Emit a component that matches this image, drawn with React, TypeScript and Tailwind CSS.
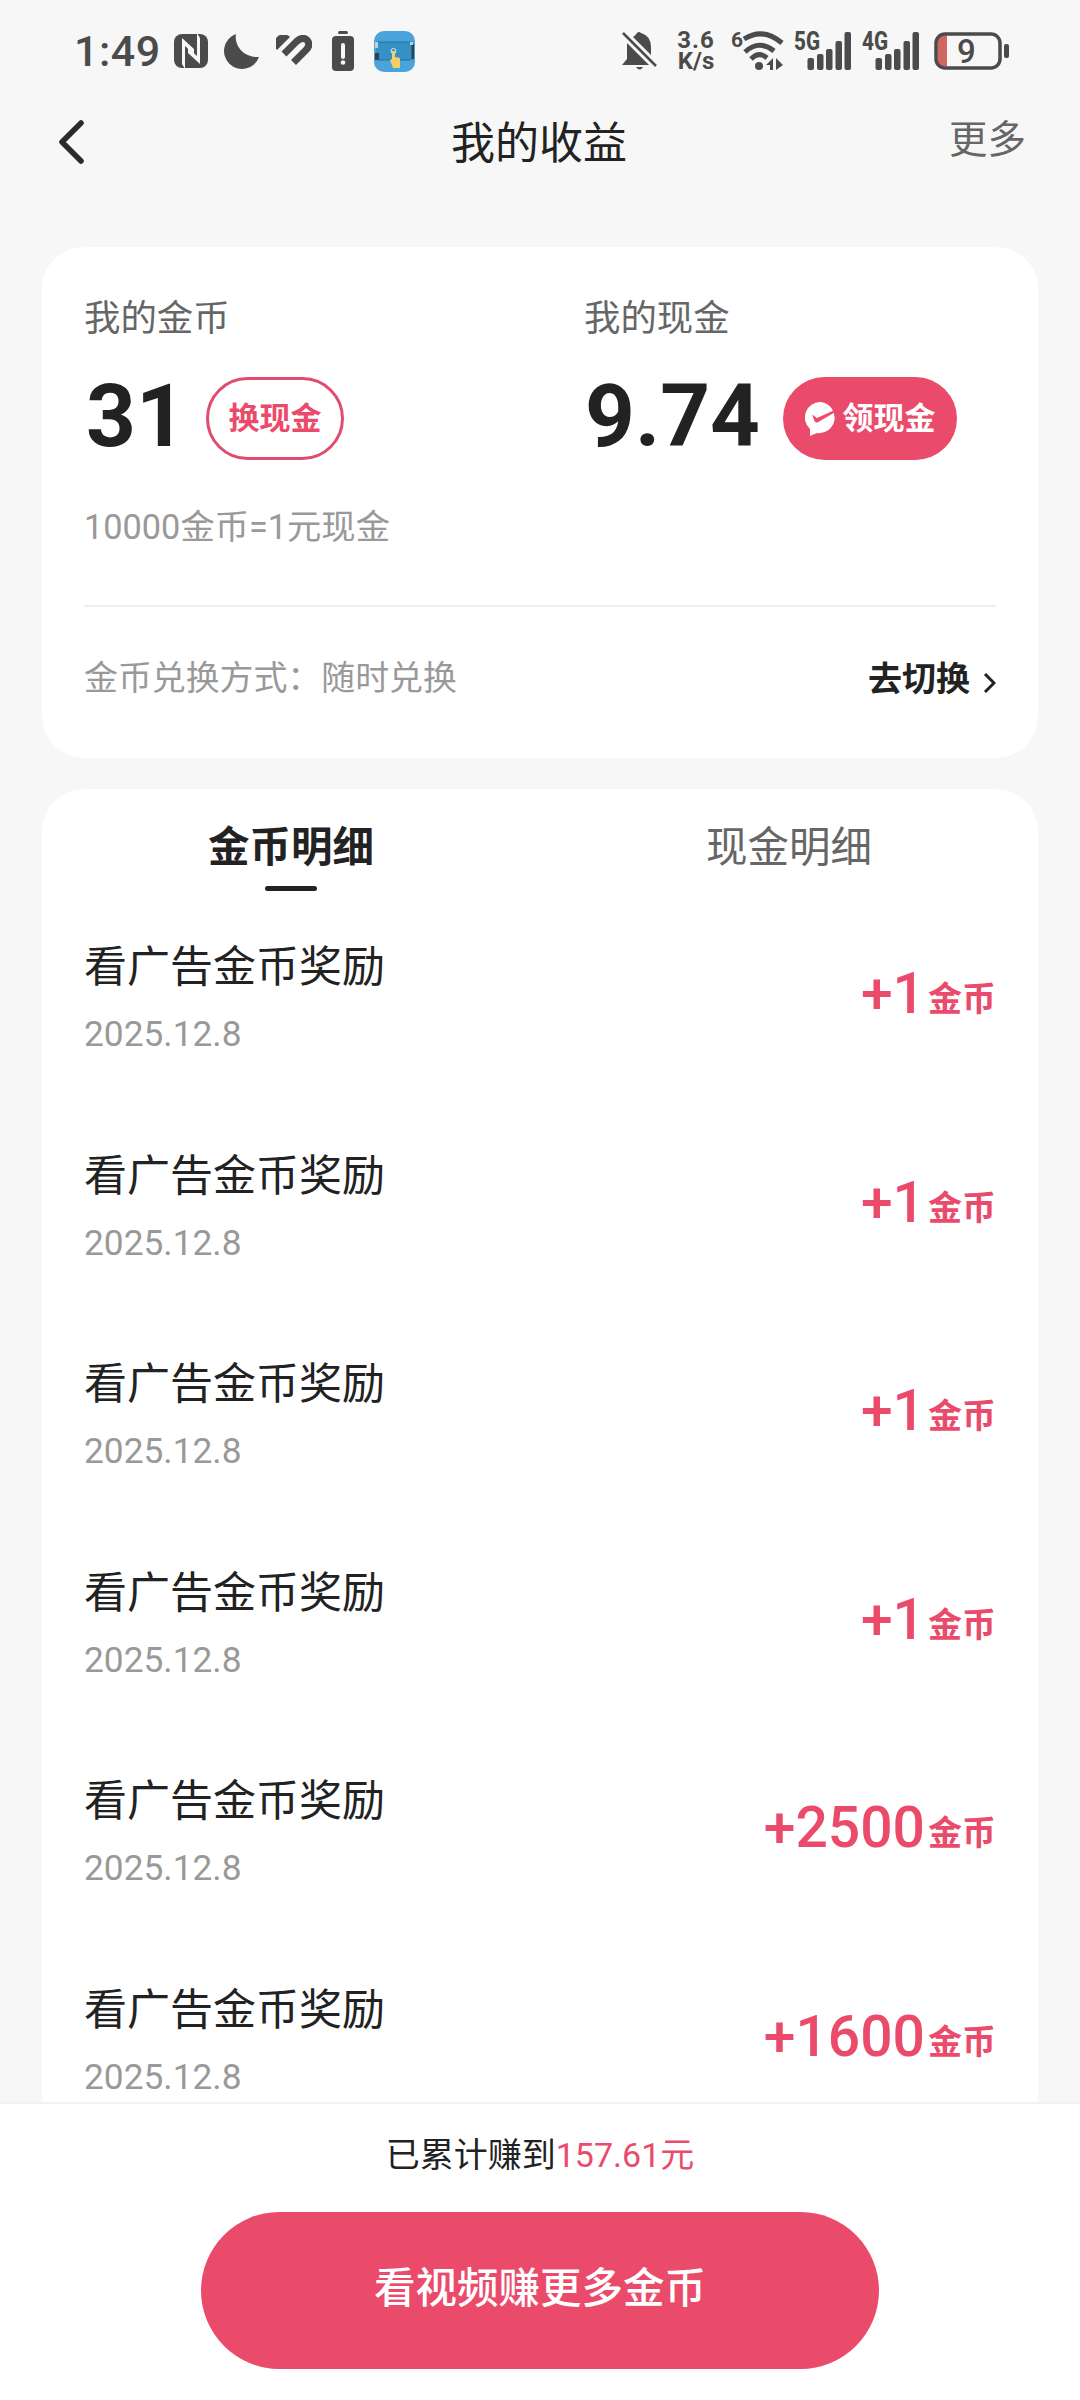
import React, { useState } from 'react';

interface CoinRecord {
    id: number;
    title: string;
    date: string;
    amount: number;
}

const RECORDS: CoinRecord[] = [
    { id: 1, title: '看广告金币奖励', date: '2025.12.8', amount: 1 },
    { id: 2, title: '看广告金币奖励', date: '2025.12.8', amount: 1 },
    { id: 3, title: '看广告金币奖励', date: '2025.12.8', amount: 1 },
    { id: 4, title: '看广告金币奖励', date: '2025.12.8', amount: 1 },
    { id: 5, title: '看广告金币奖励', date: '2025.12.8', amount: 2500 },
    { id: 6, title: '看广告金币奖励', date: '2025.12.8', amount: 1600 },
];

const SignalBars: React.FC<{ label: string }> = ({ label }) => (
    <svg className="overflow-visible" width="58" height="40" viewBox="0 0 58 40" fill="#4b4b4b">
        <text x="0" y="19" fontSize="25" fontWeight="800" textLength="26" lengthAdjust="spacingAndGlyphs">{label}</text>
        <rect x="13.500" y="27" width="6.500" height="12" rx="2" />
        <rect x="23" y="23" width="6.500" height="16" rx="2" />
        <rect x="32" y="18" width="6.500" height="21" rx="2" />
        <rect x="41.500" y="10" width="6.500" height="29" rx="2" />
        <rect x="50.500" y="1" width="6.500" height="38" rx="2" />
    </svg>
);

const StatusBar: React.FC = () => (
    <div className="flex h-[102px] items-center justify-between pl-[74px] pr-[70px] text-[#4b4b4b]">
        <div className="flex items-center">
            <span className="w-[100px] text-[43px] font-medium leading-none tracking-[0.5px]">1:49</span>
            {/* NFC */}
            <svg width="34" height="36" viewBox="0 0 34 36">
                <rect x="0" y="1" width="34" height="34" rx="8" fill="#4b4b4b" />
                <path d="M8 5L20 16V21L11 13V36L8 31Z" fill="#f7f7f7" />
                <path d="M26 31L14 20V15L23 23V0L26 5Z" fill="#f7f7f7" />
            </svg>
            {/* Do not disturb */}
            <svg className="ml-[15px]" width="37" height="37" viewBox="0 0 37 37" fill="#4b4b4b">
                <path d="M13 1C11 11 19 25 36 24A18 18 0 1 1 13 1Z" />
            </svg>
            {/* Health */}
            <svg className="ml-4" width="36" height="32" viewBox="0 0 36 32">
                <path d="M1 15A8 8 0 0 1 14 2Z" fill="#4b4b4b" />
                <path d="M8 19L20.500 6.500Q27 1 31 5Q35 10 30 15L17.500 27.500" fill="none" stroke="#4b4b4b" strokeWidth="7" />
            </svg>
            {/* Low battery */}
            <svg className="ml-5" width="22" height="40" viewBox="0 0 22 40">
                <rect x="6" y="0" width="10" height="3" rx="1.500" fill="#4b4b4b" />
                <rect x="0" y="5" width="22" height="35" rx="4" fill="#4b4b4b" />
                <path d="M11 14V26" stroke="#f7f7f7" strokeWidth="4" strokeLinecap="round" />
                <circle cx="11" cy="31.500" r="2.300" fill="#f7f7f7" />
            </svg>
            {/* Running app */}
            <svg className="ml-5" width="41" height="41" viewBox="0 0 41 41">
                <rect width="41" height="41" rx="10" fill="#4ba3dc" />
                <rect x="2" y="11" width="37" height="18" fill="#3590c4" />
                <path d="M2 11H39M4 29H37" stroke="#2b7294" strokeWidth="1" />
                <path d="M1 22h4v7H1zM37.500 13h2.500v15h-2.500z" fill="#2d4152" />
                <path d="M1 11h3v6H1zM36 11h3v3h-3z" fill="#b9d3e0" />
                <circle cx="19.500" cy="20" r="2.500" fill="none" stroke="#d5edf7" strokeWidth="1" />
                <path d="M18 20h3v6l5 1v10h-7l-3-8 2-1z" fill="#f2cf6b" />
            </svg>
        </div>
        <div className="flex items-center">
            {/* Muted */}
            <svg width="36" height="40" viewBox="0 0 36 40" fill="#4b4b4b">
                <path d="M5 12L27 34H0L5 28ZM11 6Q14 4 15 2Q17 0 19 2Q29 5 29 16V24ZM14 36h7q-3 5-7 0Z" />
                <path d="M1 2L34 35" stroke="#4b4b4b" strokeWidth="2.500" />
            </svg>
            <div className="ml-[18px] flex w-10 flex-col items-center text-[24px] font-bold leading-[21px]">
                <span className="tracking-[1px]">3.6</span>
                <span>K/s</span>
            </div>
            {/* Wi-Fi 6 */}
            <svg className="ml-4 overflow-visible" width="52" height="42" viewBox="0 0 52 42" fill="#4b4b4b">
                <text x="-1" y="17" fontSize="21" fontWeight="700">6</text>
                <path d="M12 9Q31 -3 50 13M13 22Q27 9 42 21M19 29Q27 21 35 28" fill="none" stroke="#4b4b4b" strokeWidth="5" />
                <circle cx="27" cy="36" r="4" />
                <path d="M34 35L41 28V40H38V35ZM44 28L51 35L44 40Z" />
            </svg>
            <div className="ml-2.5"><SignalBars label="5G" /></div>
            <div className="ml-2.5"><SignalBars label="4G" /></div>
            {/* Battery */}
            <svg className="ml-[14px]" width="76" height="38" viewBox="0 0 76 38">
                <path d="M13 3.500H10Q3.500 3.500 3.500 10V28Q3.500 34.500 10 34.500H13Z" fill="#cf6660" />
                <rect x="2" y="2" width="64" height="34" rx="9" fill="none" stroke="#4b4b4b" strokeWidth="3.500" />
                <rect x="70" y="12" width="5" height="14" rx="2" fill="#4b4b4b" />
                <text x="32.500" y="31" textAnchor="middle" fontSize="33" fontWeight="500" fill="#4b4b4b">9</text>
            </svg>
        </div>
    </div>
);

const RecordRow: React.FC<{ record: CoinRecord }> = ({ record }) => (
    <div className="flex h-[208.5px] shrink-0 justify-between">
        <div>
            <div className="mt-9 text-[43px] leading-[60px] text-[#222]">{record.title}</div>
            <div className="mt-[7px] text-[35.3px] leading-[60px] text-[#999]">{record.date}</div>
        </div>
        <div className="mt-[60px] flex items-start text-[#eb4b6b]">
            <span className="mt-[3px] text-[57px] font-medium leading-[60px]">+{record.amount}</span>
            <span className="ml-[3px] mt-2 text-[34px] font-bold leading-[60px]">金币</span>
        </div>
    </div>
);

export default function App() {
    const [tab, setTab] = useState<'coin' | 'cash'>('coin');

    return (
        <div className="flex h-[2400px] w-[1080px] flex-col overflow-hidden bg-[#f7f7f7] font-[Roboto,'Noto_Sans_CJK_SC',sans-serif] text-[#222]">
            <StatusBar />

            {/* Header */}
            <header className="grid h-20 grid-cols-3 items-center pl-[56px] pr-[54px]">
                <button className="pl-0.5">
                    <svg width="26" height="44" viewBox="0 0 26 44" fill="none" stroke="#2b2b2b" strokeWidth="5.500" strokeLinecap="round" strokeLinejoin="round">
                        <path d="M23 3L4 22L23 41" />
                    </svg>
                </button>
                <h1 className="pr-1 pt-[3px] text-center text-[44px] leading-none">我的收益</h1>
                <button className="pb-[3px] text-right text-[38.5px] leading-none text-[#666]">更多</button>
            </header>

            {/* Balance */}
            <section className="mx-[42px] mt-[65px] h-[511px] shrink-0 rounded-[42px] bg-white px-[42px] pt-[42px]">
                <div className="grid grid-cols-[500px_1fr]">
                    <div>
                        <div className="text-[36.4px] leading-[60px] text-[#666]">我的金币</div>
                        <div className="mt-7 flex h-[83px] items-center">
                            <span className="w-[122px] pb-[5px] pl-[2px] text-[87px] font-bold leading-[78px]">31</span>
                            <button className="h-[83px] w-[138px] rounded-full border-3 border-[#e04c6e] pt-[2px] text-[31px] font-bold text-[#eb4b6b]">换现金</button>
                        </div>
                        <div className="mt-[37px] text-[34.3px] leading-[60px] text-[#999]">10000金币=1元现金</div>
                    </div>
                    <div>
                        <div className="text-[36.4px] leading-[60px] text-[#666]">我的现金</div>
                        <div className="mt-7 flex h-[83px] items-center">
                            <span className="w-[199px] pb-[5px] pl-[1px] text-[87px] font-bold leading-[78px]">9.74</span>
                            <button className="flex h-[83px] w-[174px] items-center justify-center gap-[5px] rounded-full bg-[#eb4b6b] text-[31px] font-bold text-white">
                                <svg width="33" height="34" viewBox="0 0 33 34">
                                    <path d="M16 0A15.500 15.500 0 1 1 12 31L5 34V27A15.500 15.500 0 0 1 16 0Z" fill="#fff" />
                                    <path d="M7 12.500L12 16L32 7V9L12.500 20.500Q10.500 21 9.500 19Z" fill="#eb4b6b" />
                                </svg>
                                <span className="pt-[2px]">领现金</span>
                            </button>
                        </div>
                    </div>
                </div>
                <div className="mt-12 flex h-[147px] items-center justify-between border-t-2 border-[#eee]">
                    <span className="text-[33.9px] text-[#999]">金币兑换方式：随时兑换</span>
                    <button className="flex items-center gap-[13px] text-[34px] font-bold">
                        去切换
                        <svg className="mt-1.5" width="13" height="20" viewBox="0 0 13 20" fill="none" stroke="#222" strokeWidth="3">
                            <path d="M2 1L11 10L2 19" />
                        </svg>
                    </button>
                </div>
            </section>

            {/* Records */}
            <section className="mx-[42px] mt-[31px] flex min-h-0 flex-1 flex-col overflow-hidden rounded-t-[42px] bg-white">
                <div className="grid h-[112px] shrink-0 grid-cols-2">
                    <button onClick={() => setTab('coin')} className={`flex flex-col items-center pt-[29px] text-[41.5px] leading-[60px] ${tab === 'coin' ? 'font-bold' : 'text-[#666]'}`}>
                        金币明细
                        {tab === 'coin' && <i className="mt-2 h-[5px] w-[52px] rounded-full bg-[#222]" />}
                    </button>
                    <button onClick={() => setTab('cash')} className={`flex flex-col items-center pt-[29px] text-[41.5px] leading-[60px] ${tab === 'cash' ? 'font-bold' : 'text-[#666]'}`}>
                        现金明细
                        {tab === 'cash' && <i className="mt-2 h-[5px] w-[52px] rounded-full bg-[#222]" />}
                    </button>
                </div>
                <div className="flex flex-col px-[42px]">
                    {RECORDS.map((record) => (
                        <RecordRow key={record.id} record={record} />
                    ))}
                </div>
            </section>

            {/* Footer */}
            <footer className="flex h-[298px] shrink-0 flex-col items-center border-t-2 border-[#f2f2f2] bg-white pt-[21px]">
                <div className="text-[34px] leading-[60px]">
                    已累计赚到<span className="text-[#eb4b6b]">157.61元</span>
                </div>
                <button className="mt-[27px] h-[157px] w-[678px] shrink-0 rounded-full bg-[#eb4b6b] pb-[2px] text-[41.5px] font-medium text-white">看视频赚更多金币</button>
            </footer>
        </div>
    );
}
